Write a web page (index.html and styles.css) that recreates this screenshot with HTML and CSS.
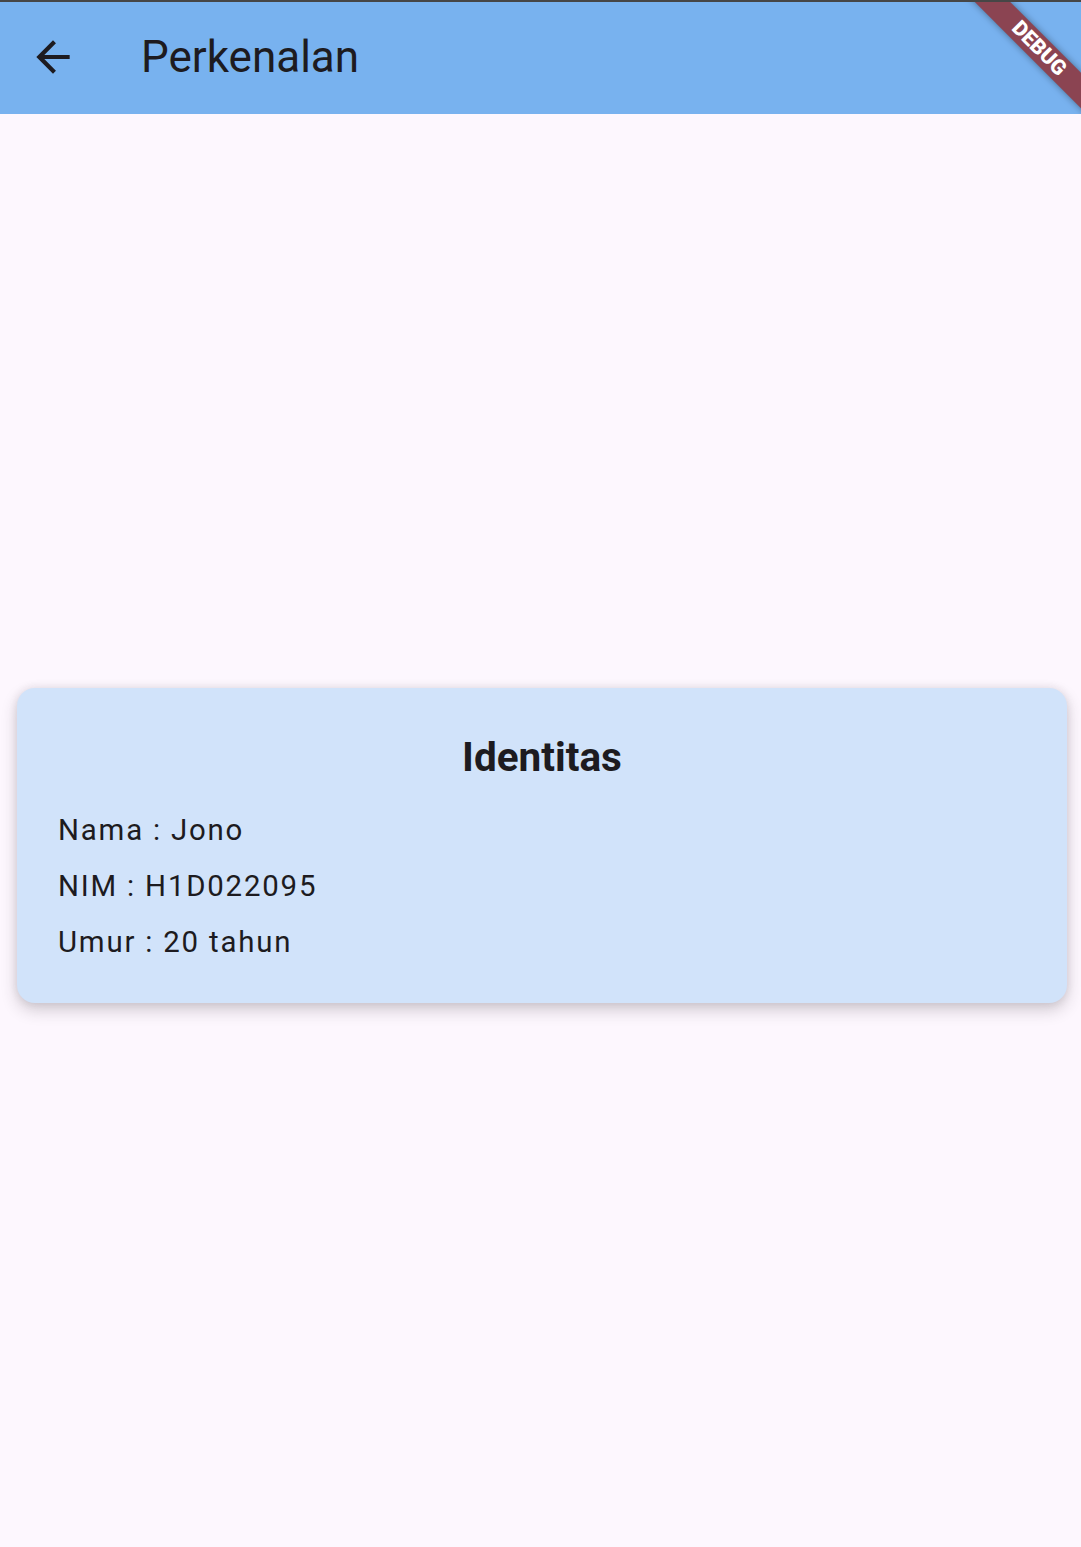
FILE: index.html
```html
<!DOCTYPE html>
<html lang="id">
<head>
<meta charset="utf-8">
<title>Perkenalan</title>
<link rel="stylesheet" href="styles.css">
</head>
<body>
<div class="status-line"></div>
<header class="appbar">
  <button class="back" aria-label="Kembali">
    <svg viewBox="0 0 24 24" width="50" height="50"><path d="M20 11H7.83l5.59-5.59L12 4l-8 8 8 8 1.41-1.41L7.83 13H20v-2z" fill="#1d1b20"/></svg>
  </button>
  <h1 class="title">Perkenalan</h1>
  <div class="debug-banner"><span>DEBUG</span></div>
</header>
<main class="content">
  <section class="card">
    <h2 class="card-title">Identitas</h2>
    <p class="row">Nama : Jono</p>
    <p class="row">NIM : H1D022095</p>
    <p class="row">Umur : 20 tahun</p>
  </section>
</main>
</body>
</html>
```
FILE: styles.css
```css
html, body {
  margin: 0;
  padding: 0;
}
body {
  width: 1081px;
  height: 1547px;
  background: #fdf7fe;
  font-family: Roboto, "Noto Sans", "Liberation Sans", sans-serif;
  color: #1d1b20;
  display: flex;
  flex-direction: column;
  overflow: hidden;
}
.status-line {
  height: 2px;
  background: #464646;
  position: relative;
  z-index: 2;
}
.appbar {
  position: relative;
  height: 112px;
  background: #78b2ef;
  display: flex;
  align-items: center;
  padding: 0 0 3px 28px;
  box-sizing: border-box;
  overflow: hidden;
}
.back {
  width: 50px;
  height: 50px;
  padding: 0;
  margin: 0;
  border: 0;
  background: transparent;
  display: flex;
}
.title {
  margin: 0 0 0 63px;
  font-size: 44px;
  font-weight: 400;
  line-height: 54px;
  letter-spacing: 0;
}
.debug-banner {
  position: absolute;
  left: 889px;
  top: 34px;
  width: 300px;
  height: 25px;
  background: #8b4452;
  box-shadow: 0 0 7px rgba(0, 0, 0, 0.4);
  transform: rotate(45deg);
  display: flex;
  align-items: center;
  justify-content: center;
}
.debug-banner span {
  color: #fff;
  font-size: 21px;
  font-weight: 900;
  line-height: 21px;
  letter-spacing: 0;
}
.content {
  flex: 1;
  display: flex;
  align-items: center;
  padding: 30px 14px 0 17px;
}
.card {
  flex: 1;
  background: #d1e3fa;
  border-radius: 18px;
  box-shadow: 0 7px 16px rgba(50, 40, 50, 0.22), 0 0 8px rgba(50, 40, 50, 0.1);
  padding: 44px 41px 33px;
}
.card-title {
  margin: 0 0 20px;
  text-align: center;
  font-size: 40.5px;
  font-weight: 700;
  line-height: 50px;
}
.row {
  margin: 0;
  font-size: 29.4px;
  line-height: 56px;
  font-weight: 400;
  letter-spacing: 1.8px;
}
```
